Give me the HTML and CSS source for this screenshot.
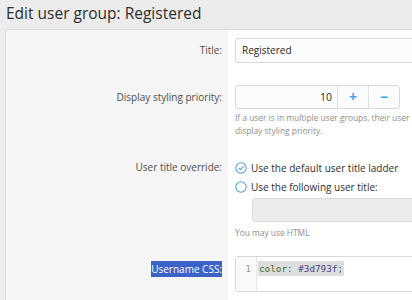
FILE: index.html
```html
<!DOCTYPE html>
<html lang="en">
<head>
    <meta charset="UTF-8">
    <title>Edit user group: Registered</title>
    <link rel="stylesheet" href="styles.css">
</head>
<body>
    <h1 class="page-title">Edit user group: Registered</h1>

    <div class="block">
        <!-- Title -->
        <div class="row row-first">
            <div class="row-label">Title:</div>
            <div class="row-input">
                <div class="input input-title">Registered</div>
            </div>
        </div>

        <!-- Priority -->
        <div class="row">
            <div class="row-label">Display styling priority:</div>
            <div class="row-input">
                <div class="num-group">
                    <div class="num-value">10</div>
                    <div class="num-btn">+</div>
                    <div class="num-btn">&minus;</div>
                </div>
                <div class="hint">If a user is in multiple user groups, their user<br>display styling priority.</div>
            </div>
        </div>

        <!-- User title -->
        <div class="row">
            <div class="row-label label-radio">User title override:</div>
            <div class="row-input">
                <div class="radio">
                    <svg class="radio-icon" viewBox="0 0 12 12" width="12" height="12">
                        <circle cx="6" cy="6" r="5.2" fill="none" stroke="#5b9fd9" stroke-width="1.1"/>
                        <path d="M3.6 6.1 L5.3 7.7 L8.4 4.5" fill="none" stroke="#5b9fd9" stroke-width="1.1"/>
                    </svg>
                    <span>Use the default user title ladder</span>
                </div>
                <div class="radio">
                    <svg class="radio-icon" viewBox="0 0 12 12" width="12" height="12">
                        <circle cx="6" cy="6" r="5.2" fill="none" stroke="#5b9fd9" stroke-width="1.1"/>
                    </svg>
                    <span>Use the following user title:</span>
                </div>
                <div class="input input-disabled"></div>
                <div class="hint hint-html">You may use HTML</div>
            </div>
        </div>

        <!-- Username CSS -->
        <div class="row">
            <div class="row-label label-code"><span class="selected">Username CSS:</span></div>
            <div class="row-input input-code">
                <div class="code-box">
                    <div class="gutter">1</div>
                    <div class="code"><span class="code-line"><span class="c-prop">color</span>: <span class="c-val">#3d793f</span>;</span></div>
                </div>
            </div>
        </div>
    </div>
</body>
</html>
```

FILE: styles.css
```css
html, body {
    overflow: hidden;
}

body {
    margin: 0;
    background-color: #ececec;
    font-family: "Open Sans", "Noto Sans", sans-serif;
    color: #3c3c3c;
    width: 412px;
    height: 300px;
}

.page-title {
    margin: 0;
    padding: 1px 6px 0;
    height: 28px;
    font-size: 15.5px;
    font-weight: 400;
    line-height: 24px;
    color: #2e2e2e;
}

.block {
    margin-left: 5px;
    width: 700px;
    border-top: 1px solid #dcdcdc;
    border-left: 1px solid #dcdcdc;
    background-color: #fff;
}

.row {
    display: flex;
}

.row-label {
    flex: 0 0 auto;
    width: 216px;
    padding: 11px 6px 10px 0;
    background-color: #f5f5f5;
    text-align: right;
    font-size: 10px;
    line-height: 24px;
    color: #4d4d4d;
}

.row-input {
    flex: 1;
    padding: 11px 0 10px 7px;
}

.row-first .row-label,
.row-first .row-input {
    padding-top: 8px;
    padding-bottom: 11px;
}

.input {
    box-sizing: border-box;
    height: 25px;
    width: 300px;
    border: 1px solid #d8d8d8;
    border-radius: 3px;
    padding: 0 6px;
    font-size: 10px;
    line-height: 23px;
    color: #2a2a2a;
    background-color: #fbfcfe;
}

.num-group {
    box-sizing: border-box;
    display: flex;
    width: 165px;
    height: 24px;
    border: 1px solid #d8d8d8;
    border-radius: 3px;
    background-color: #fbfcfe;
    font-size: 10.5px;
    line-height: 22px;
}

.num-value {
    flex: 1;
    text-align: right;
    padding-right: 5px;
    color: #2a2a2a;
}

.num-btn {
    width: 30px;
    border-left: 1px solid #e2e2e2;
    text-align: center;
    color: #47a0e6;
    font-size: 14px;
    font-weight: 700;
}

.hint {
    margin-top: 2px;
    font-size: 8.4px;
    line-height: 13px;
    color: #8e8e8e;
}

.label-radio {
    line-height: 19px;
}

.radio {
    display: flex;
    align-items: center;
    height: 19px;
    font-size: 10px;
    color: #2e2e2e;
}

.radio-icon {
    margin: 0 4px 0 0;
}

.input-disabled {
    margin: 2px 0 0 17px;
    height: 24px;
    background-color: #ececec;
    border-color: #dadada;
}

.hint-html {
    margin-top: 4px;
}

.label-code {
    padding-top: 12px;
    line-height: 16px;
}

.input-code {
    padding-top: 7px;
}

.selected {
    background-color: #3a62c9;
    color: #fff;
    padding: 1px 0;
}

.code-box {
    display: flex;
    box-sizing: border-box;
    width: 300px;
    height: 36px;
    border: 1px solid #d8d8d8;
    border-radius: 3px;
    background-color: #fff;
}

.gutter {
    width: 21px;
    padding: 3px 5px 0 0;
    box-sizing: border-box;
    text-align: right;
    border-right: 1px solid #e4e4e4;
    background-color: #f9f9f9;
    font-family: "DejaVu Sans Mono", monospace;
    font-size: 9.5px;
    line-height: 17px;
    color: #999;
}

.code {
    padding: 3px 0 0 1px;
    font-family: "DejaVu Sans Mono", monospace;
    font-size: 9.3px;
    line-height: 17px;
    color: #555;
}

.code-line {
    background-color: #dcdedc;
    padding: 2px 1px;
}

.c-prop {
    color: #3f6b3a;
}

.c-val {
    color: #4c3f86;
}
```
